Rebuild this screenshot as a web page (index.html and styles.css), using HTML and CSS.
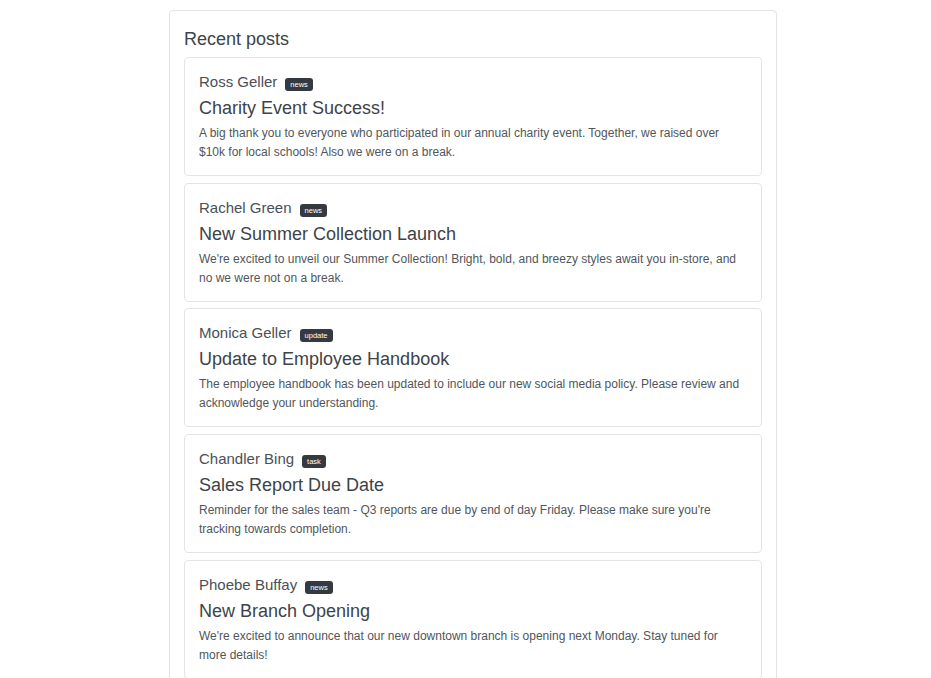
FILE: index.html
```html
<!DOCTYPE html>
<html>
<head>
<meta charset="utf-8">
<link rel="stylesheet" href="styles.css">
</head>
<body>
<div class="panel">
  <h2 class="panel-title">Recent posts</h2>
  <div class="post">
    <div class="author">Ross Geller <span class="badge">news</span></div>
    <h3 class="post-title">Charity Event Success!</h3>
    <p class="post-body">A big thank you to everyone who participated in our annual charity event. Together, we raised over $10k for local schools! Also we were on a break.</p>
  </div>
  <div class="post">
    <div class="author">Rachel Green <span class="badge">news</span></div>
    <h3 class="post-title">New Summer Collection Launch</h3>
    <p class="post-body">We're excited to unveil our Summer Collection! Bright, bold, and breezy styles await you in-store, and no we were not on a break.</p>
  </div>
  <div class="post">
    <div class="author">Monica Geller <span class="badge">update</span></div>
    <h3 class="post-title">Update to Employee Handbook</h3>
    <p class="post-body">The employee handbook has been updated to include our new social media policy. Please review and acknowledge your understanding.</p>
  </div>
  <div class="post">
    <div class="author">Chandler Bing <span class="badge">task</span></div>
    <h3 class="post-title">Sales Report Due Date</h3>
    <p class="post-body">Reminder for the sales team - Q3 reports are due by end of day Friday. Please make sure you're tracking towards completion.</p>
  </div>
  <div class="post">
    <div class="author">Phoebe Buffay <span class="badge">news</span></div>
    <h3 class="post-title">New Branch Opening</h3>
    <p class="post-body">We're excited to announce that our new downtown branch is opening next Monday. Stay tuned for more details!</p>
  </div>
</div>
</body>
</html>
```

FILE: styles.css
```css
html, body {
  margin: 0;
  background: #ffffff;
}
body {
  padding: 10px 0 0 169px;
  font-family: "Liberation Sans", Arial, sans-serif;
  color: #495057;
}
.panel {
  width: 578px;
  border: 1px solid #e3e3e3;
  border-radius: 4px;
  padding: 18px 14px 15px 14px;
  display: flex;
  flex-direction: column;
  gap: 6.75px;
}
.panel-title {
  margin: 0;
  font-size: 18px;
  line-height: 21px;
  font-weight: normal;
  color: #3d4349;
}
.post {
  border: 1px solid #e2e5e8;
  border-radius: 4px;
  padding: 15px 14px 13px 14px;
}
.author {
  display: flex;
  align-items: center;
  gap: 8px;
  height: 18px;
  font-size: 15px;
  line-height: 18px;
  color: #4a5056;
}
.badge {
  display: inline-block;
  background: #343a40;
  color: #ffffff;
  font-size: 7.5px;
  line-height: 13px;
  padding: 0 5px;
  border-radius: 3px;
  margin-top: 5px;
}
.post-title {
  margin: 6px 0 0 0;
  font-size: 18px;
  line-height: 22px;
  font-weight: normal;
  color: #3d4349;
}
.post-body {
  margin: 5px 0 0 0;
  font-size: 12px;
  line-height: 19px;
  color: #50565c;
}
```
